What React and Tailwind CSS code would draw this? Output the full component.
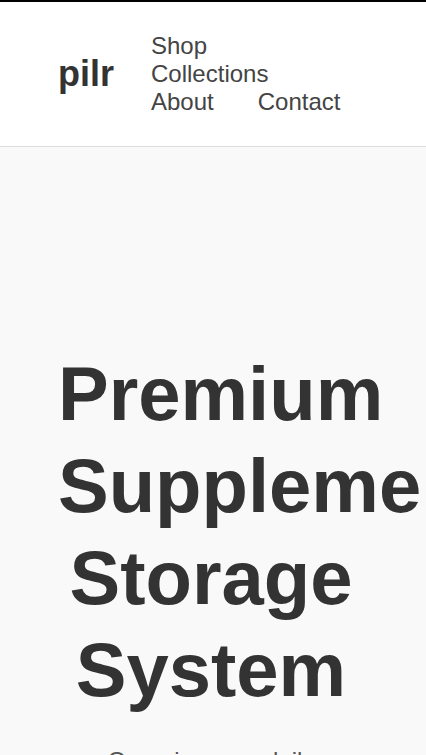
export default function App() {
  return (
    <div className="min-h-screen overflow-x-hidden bg-[#f9f9f9] font-['Liberation_Sans',Arial,sans-serif]">
      <div className="h-[2px] bg-black" />
      <header className="flex items-center gap-[37px] border-b border-[#dddddd] bg-white py-[30px] pl-[58px] pr-[56px]">
        <a href="#" className="text-[36px] font-bold leading-normal text-[#333333]">
          pilr
        </a>
        <nav className="w-[200px]">
          <ul className="flex flex-wrap gap-x-[44px] text-[24px] leading-[28px] text-[#444444]">
            <li><a href="#">Shop</a></li>
            <li><a href="#">Collections</a></li>
            <li><a href="#">About</a></li>
            <li><a href="#">Contact</a></li>
          </ul>
        </nav>
      </header>
      <main>
        <section className="pl-[58px] pr-[62px] pt-[201px] pb-20 text-center">
          <h1 className="mb-[26px] text-[76px] font-bold leading-[92px] text-[#333333]">
            Premium Supplement Storage System
          </h1>
          <p className="text-[24px] leading-[1.6] text-[#555555]">
            Organize your daily supplements with elegance and ease.
          </p>
          <a href="#" className="mt-8 inline-block rounded bg-[#333333] px-8 py-4 text-[18px] text-white">
            Shop Now
          </a>
        </section>
      </main>
    </div>
  );
}
